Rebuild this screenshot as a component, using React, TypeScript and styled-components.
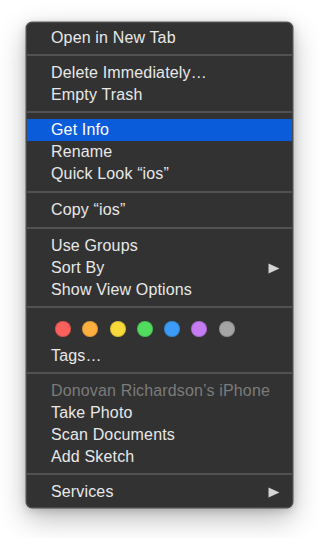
import styled, { createGlobalStyle } from 'styled-components'

type Entry =
  | { kind: 'item'; label: string; active?: boolean; disabled?: boolean; submenu?: boolean }
  | { kind: 'sep' }
  | { kind: 'tags' }

const GlobalStyle = createGlobalStyle`
  html, body {
    margin: 0;
    background: #ffffff;
  }
  body {
    font-family: "Liberation Sans", Arial, sans-serif;
    -webkit-font-smoothing: antialiased;
  }
`

const Page = styled.div`
  width: 320px;
  height: 538px;
  padding: 22px 0 0 26px;
  box-sizing: border-box;
`

const Menu = styled.div`
  width: 267px;
  box-sizing: border-box;
  padding: 4px 0 4px;
  background: #323232;
  border: 1px solid #4a4a4a;
  border-radius: 6px;
  box-shadow: 0 0 0 0.5px rgba(0, 0, 0, 0.6), 0 10px 28px rgba(0, 0, 0, 0.28),
    0 2px 8px rgba(0, 0, 0, 0.18);
`

const Row = styled.div<{ $active?: boolean; $disabled?: boolean }>`
  height: 22px;
  display: flex;
  align-items: center;
  justify-content: space-between;
  padding: 0 12px 0 24px;
  font-size: 16px;
  letter-spacing: 0.15px;
  color: ${({ $active, $disabled }) =>
    $disabled ? '#7b7b7b' : $active ? '#ffffff' : '#e8e8e8'};
  background: ${({ $active }) => ($active ? '#0b5cdb' : 'transparent')};
  white-space: nowrap;
`

const Separator = styled.div<{ $wide?: boolean }>`
  height: 2px;
  margin: ${({ $wide }) => ($wide ? '6px 0 6px' : '5px 0 6px')};
  background: #515151;
`

const TagDots = styled.div`
  height: 31px;
  box-sizing: border-box;
  padding: 0 0 2px 28px;
  display: flex;
  align-items: center;
  gap: 11.3px;
`

const Dot = styled.span<{ $color: string }>`
  width: 16px;
  height: 16px;
  border-radius: 50%;
  background: ${({ $color }) => $color};
  box-shadow: inset 0 0 0 1px rgba(0, 0, 0, 0.12);
`

const Arrow = () => (
  <svg width="12" height="11" viewBox="0 0 12 11">
    <path d="M0.5 0.5 L11.5 5.5 L0.5 10.5 Z" fill="#d4d4d4" />
  </svg>
)

const tagColors = ['#fc605c', '#fdb03f', '#f8d93a', '#52dc5f', '#3c9bf6', '#c57bf1', '#a5a5a5']

const entries: Entry[] = [
  { kind: 'item', label: 'Open in New Tab' },
  { kind: 'sep' },
  { kind: 'item', label: 'Delete Immediately…' },
  { kind: 'item', label: 'Empty Trash' },
  { kind: 'sep' },
  { kind: 'item', label: 'Get Info', active: true },
  { kind: 'item', label: 'Rename' },
  { kind: 'item', label: 'Quick Look “ios”' },
  { kind: 'sep' },
  { kind: 'item', label: 'Copy “ios”' },
  { kind: 'sep' },
  { kind: 'item', label: 'Use Groups' },
  { kind: 'item', label: 'Sort By', submenu: true },
  { kind: 'item', label: 'Show View Options' },
  { kind: 'sep' },
  { kind: 'tags' },
  { kind: 'item', label: 'Tags…' },
  { kind: 'sep' },
  { kind: 'item', label: 'Donovan Richardson’s iPhone', disabled: true },
  { kind: 'item', label: 'Take Photo' },
  { kind: 'item', label: 'Scan Documents' },
  { kind: 'item', label: 'Add Sketch' },
  { kind: 'sep' },
  { kind: 'item', label: 'Services', submenu: true },
]

export default function App() {
  return (
    <Page>
      <GlobalStyle />
      <Menu>
        {entries.map((entry, i) => {
          if (entry.kind === 'sep') return <Separator key={i} $wide={i === 8 || i === 10} />
          if (entry.kind === 'tags')
            return (
              <TagDots key={i}>
                {tagColors.map((c) => (
                  <Dot key={c} $color={c} />
                ))}
              </TagDots>
            )
          return (
            <Row key={i} $active={entry.active} $disabled={entry.disabled}>
              <span>{entry.label}</span>
              {entry.submenu && <Arrow />}
            </Row>
          )
        })}
      </Menu>
    </Page>
  )
}
